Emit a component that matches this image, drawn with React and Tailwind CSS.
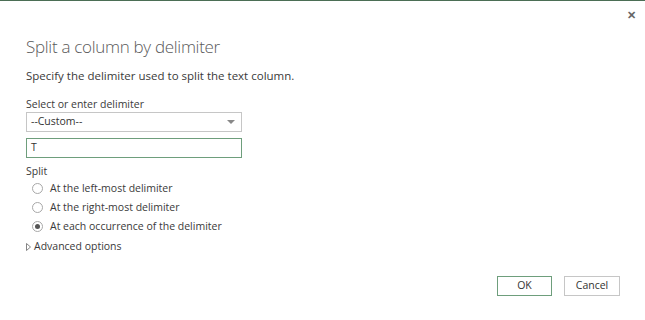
import { useState } from 'react'

const OPTIONS = [
  'At the left-most delimiter',
  'At the right-most delimiter',
  'At each occurrence of the delimiter',
]

function Radio({ checked }) {
  return (
    <span className="w-[11px] h-[11px] rounded-full border border-[#a8a8a8] bg-white flex items-center justify-center">
      {checked && <span className="w-[5px] h-[5px] rounded-full bg-[#555]" />}
    </span>
  )
}

export default function App() {
  const [choice, setChoice] = useState(2)

  return (
    <div
      className="w-[645px] h-[320px] bg-white border-t border-[#4b6e55] relative text-[#444] overflow-hidden"
      style={{ fontFamily: '"Open Sans", "Noto Sans", sans-serif' }}
    >
      {/* close */}
      <button className="absolute right-[9px] top-[8px] text-[#666] text-[11px] leading-none font-bold">✕</button>

      <div className="pl-[26px] pt-[34px] flex flex-col">
        <h1 className="text-[17px] leading-[24px] font-light text-[#5a5a5a] tracking-[-0.3px]">Split a column by delimiter</h1>
        <p className="mt-[9px] text-[11.5px] leading-[16px] text-[#3a3a3a]">Specify the delimiter used to split the text column.</p>

        <label className="mt-[13px] text-[10.5px] leading-[14px] text-[#3a3a3a]">Select or enter delimiter</label>
        <div className="mt-[1px] w-[216px] h-[20px] border border-[#c6c6c6] flex items-center justify-between pl-[4px] pr-[6px]">
          <span className="text-[10.5px] text-[#333]">--Custom--</span>
          <span className="w-0 h-0 border-l-[4px] border-r-[4px] border-t-[4px] border-l-transparent border-r-transparent border-t-[#888]" />
        </div>
        <div className="mt-[6px] w-[216px] h-[20px] border border-[#6e9e7c] flex items-center pl-[4px]">
          <span className="text-[10.5px] text-[#333]">T</span>
        </div>

        <span className="mt-[6px] text-[10.5px] leading-[14px] text-[#3a3a3a]">Split</span>
        <div className="mt-[1px] flex flex-col">
          {OPTIONS.map((o, i) => (
            <div key={o} onClick={() => setChoice(i)} className="h-[19px] flex items-center gap-[7px] pl-[6px]">
              <Radio checked={choice === i} />
              <span className="text-[10.5px] text-[#3a3a3a]">{o}</span>
            </div>
          ))}
        </div>

        <div className="mt-[1px] flex items-center gap-[3px] h-[19px]">
          <svg width="5" height="8" viewBox="0 0 5 8">
            <path d="M0.5 0.5 L4.5 4 L0.5 7.5 Z" fill="none" stroke="#777" strokeWidth="0.9" />
          </svg>
          <span className="text-[10.5px] text-[#3a3a3a]">Advanced options</span>
        </div>
      </div>

      <div className="absolute right-[25px] bottom-[24px] flex gap-[12px]">
        <button className="w-[55px] h-[20px] border border-[#6e9e7c] text-[10.5px] text-[#333] bg-white">OK</button>
        <button className="w-[56px] h-[20px] border border-[#c6c6c6] text-[10.5px] text-[#333] bg-white">Cancel</button>
      </div>
    </div>
  )
}
